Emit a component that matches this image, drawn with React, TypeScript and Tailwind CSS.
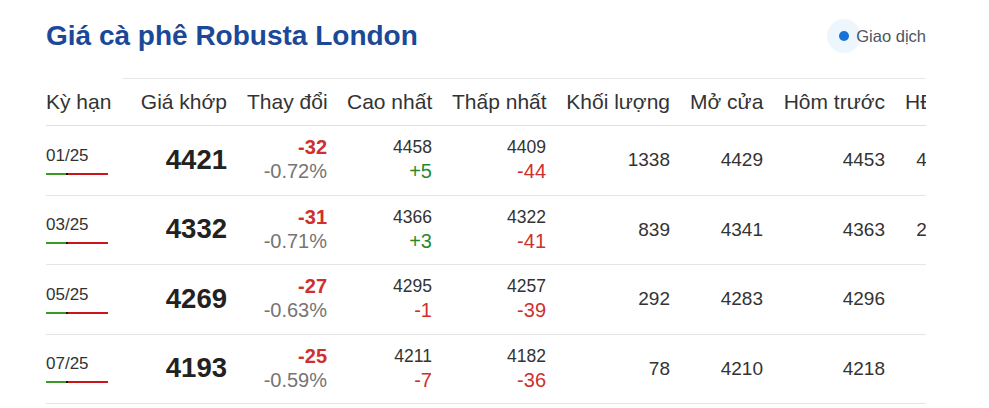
import React from 'react';

type Row = {
  term: string;
  price: string;
  change: string;
  pct: string;
  high: string;
  highChg: string;
  low: string;
  lowChg: string;
  volume: string;
  open: string;
  prev: string;
  oi: string;
};

const rows: Row[] = [
  { term: '01/25', price: '4421', change: '-32', pct: '-0.72%', high: '4458', highChg: '+5', low: '4409', lowChg: '-44', volume: '1338', open: '4429', prev: '4453', oi: '41250' },
  { term: '03/25', price: '4332', change: '-31', pct: '-0.71%', high: '4366', highChg: '+3', low: '4322', lowChg: '-41', volume: '839', open: '4341', prev: '4363', oi: '22839' },
  { term: '05/25', price: '4269', change: '-27', pct: '-0.63%', high: '4295', highChg: '-1', low: '4257', lowChg: '-39', volume: '292', open: '4283', prev: '4296', oi: '8456' },
  { term: '07/25', price: '4193', change: '-25', pct: '-0.59%', high: '4211', highChg: '-7', low: '4182', lowChg: '-36', volume: '78', open: '4210', prev: '4218', oi: '2113' },
];

const chgColor = (v: string) => (v.startsWith('+') ? 'text-[#27892f]' : 'text-[#d0302b]');

const headers = ['Kỳ hạn', 'Giá khớp', 'Thay đổi', 'Cao nhất', 'Thấp nhất', 'Khối lượng', 'Mở cửa', 'Hôm trước', 'HĐ mở'];
const widths = [76, 115, 100, 105, 114, 124, 93, 122, 84];

export default function App() {
  return (
    <div className="bg-white w-[989px] h-[408px] px-[46px] font-['Liberation_Sans',Arial,sans-serif] text-[#333]">
      <div className="w-[880px] overflow-hidden">
        {/* title */}
        <div className="flex items-center justify-between h-[72px] mb-[6px]">
          <h1 className="text-[28px] leading-[32px] font-bold text-[#1b4898]">Giá cà phê Robusta London</h1>
          <div className="flex items-center shrink-0 whitespace-nowrap">
            <span className="w-[34px] h-[34px] rounded-full bg-[#eef6fd] flex items-center justify-center shrink-0">
              <span className="w-[10px] h-[10px] rounded-full bg-[#1773d6]" />
            </span>
            <span className="-ml-[5px] text-[16.5px] text-[#4b5563]">Giao dịch</span>
          </div>
        </div>

        {/* table */}
        <table className="table-fixed border-collapse w-[929px]">
          <colgroup>
            {widths.map((w, i) => (
              <col key={i} style={{ width: w }} />
            ))}
          </colgroup>
          <thead>
            <tr>
              {headers.map((h, i) => (
                <th
                  key={h}
                  className={`h-[47px] font-normal text-[21px] whitespace-nowrap border-b border-[#dcdfe3] ${
                    i === 0 ? 'text-left pl-0' : 'text-right px-[10px] border-t border-t-[#e5e7eb]'
                  }`}
                >
                  {h}
                </th>
              ))}
            </tr>
          </thead>
          <tbody>
            {rows.map((r) => (
              <tr key={r.term} className="border-b border-[#e3e6e9]">
                <td className="h-[69.5px] align-middle">
                  <div className="text-[17px] leading-[20px]">{r.term}</div>
                  <div className="flex mt-[7px] h-[2px] w-[62px]">
                    <span className="w-[20px] bg-[#3a9a26]" />
                    <span className="w-[2px] bg-[#111]" />
                    <span className="w-[40px] bg-[#c8161b]" />
                  </div>
                </td>
                <td className="text-right px-[10px] pb-[2px] text-[27.5px] font-bold text-[#222]">{r.price}</td>
                <td className="text-right px-[10px] pb-[2px]">
                  <div className="text-[20px] leading-[24px] font-bold text-[#d0302b]">{r.change}</div>
                  <div className="text-[20px] leading-[24px] text-[#757575]">{r.pct}</div>
                </td>
                <td className="text-right px-[10px] pb-[2px]">
                  <div className="text-[17.5px] leading-[24px]">{r.high}</div>
                  <div className={`text-[20px] leading-[24px] ${chgColor(r.highChg)}`}>{r.highChg}</div>
                </td>
                <td className="text-right px-[10px] pb-[2px]">
                  <div className="text-[17.5px] leading-[24px]">{r.low}</div>
                  <div className={`text-[20px] leading-[24px] ${chgColor(r.lowChg)}`}>{r.lowChg}</div>
                </td>
                <td className="text-right px-[10px] text-[19px]">{r.volume}</td>
                <td className="text-right px-[10px] text-[19px]">{r.open}</td>
                <td className="text-right px-[10px] text-[19px]">{r.prev}</td>
                <td className="text-right px-[10px] text-[19px]">{r.oi}</td>
              </tr>
            ))}
          </tbody>
        </table>
      </div>
    </div>
  );
}
